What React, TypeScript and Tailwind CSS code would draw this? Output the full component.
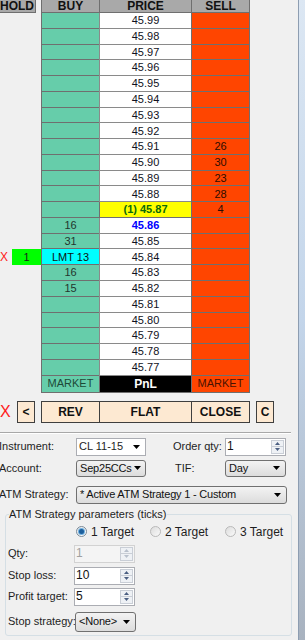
const prices = Array.from({ length: 23 }, (_, i) => (45.99 - i * 0.01).toFixed(2));

const sellVol: Record<string, string> = { '45.91': '26', '45.90': '30', '45.89': '23', '45.88': '28', '45.87': '4' };
const buyVol: Record<string, string> = { '45.86': '16', '45.85': '31', '45.83': '16', '45.82': '15' };

function DownArrow() {
  return (
    <svg width="7" height="4" viewBox="0 0 7 4" className="shrink-0">
      <polygon points="0,0 7,0 3.5,4" fill="#000" />
    </svg>
  );
}

function Spinner({ value, disabled }: { value: string; disabled?: boolean }) {
  return (
    <div
      className={
        disabled
          ? 'flex h-[18px] w-[61px] border border-[#d2d2d2] bg-[#f4f4f4] text-[#a0a0a0]'
          : 'flex h-[18px] w-[61px] border border-[#abadb3] bg-white text-[#111]'
      }
    >
      <span className="flex-1 pl-[1px] text-[12px] leading-[14px]">{value}</span>
      <div className="my-[1px] mr-[1px] flex w-[13px] flex-col border border-[#c9ced6] bg-[#eef1f5]">
        <div className="flex flex-1 items-center justify-center border-b border-[#c9ced6]">
          <svg width="5" height="3" viewBox="0 0 5 3">
            <polygon points="0,3 5,3 2.5,0" fill={disabled ? '#b8c0cc' : '#4b5f82'} />
          </svg>
        </div>
        <div className="flex flex-1 items-center justify-center">
          <svg width="5" height="3" viewBox="0 0 5 3">
            <polygon points="0,0 5,0 2.5,3" fill={disabled ? '#b8c0cc' : '#4b5f82'} />
          </svg>
        </div>
      </div>
    </div>
  );
}

function Combo({ text, w }: { text: string; w: string }) {
  return (
    <div
      className={`flex h-full items-center justify-between gap-[2px] rounded-[3px] border border-[#707070] bg-gradient-to-b from-[#f3f3f3] to-[#dcdcdc] pl-[3px] pr-[5px] text-[11px] tracking-[-0.2px] text-[#111] ${w}`}
    >
      <span className="whitespace-nowrap leading-none">{text}</span>
      <DownArrow />
    </div>
  );
}

function Radio({ checked }: { checked?: boolean }) {
  return (
    <span
      className={
        checked
          ? 'flex h-[11px] w-[11px] items-center justify-center rounded-full border border-[#7a8a99] bg-gradient-to-br from-[#e4e4e4] to-white'
          : 'flex h-[11px] w-[11px] items-center justify-center rounded-full border border-[#b9b9b9] bg-gradient-to-br from-[#dcdcdc] to-[#fafafa]'
      }
    >
      {checked && <span className="h-[5px] w-[5px] rounded-full bg-[#1d5f9c] shadow-[0_0_0_1px_#6fb0e0]" />}
    </span>
  );
}

function LadderRow({ price }: { price: string }) {
  const lmt = price === '45.84';
  const last = price === '45.87';
  const bid = price === '45.86';
  return (
    <div className="flex h-[15.78px]">
      <div className="flex w-[41px] items-stretch">
        {lmt && (
          <>
            <span className="flex w-[12px] items-center text-[12px] leading-none text-[#ff1a1a]">X</span>
            <div className="flex flex-1 items-center justify-center bg-[#00ff00] text-[11px] text-[#1a1a1a]">1</div>
          </>
        )}
      </div>
      <div
        className={
          lmt
            ? 'flex w-[58px] items-center justify-center border-b border-l border-[#6f6f6f] bg-[#00ffff] text-[11px] text-[#111]'
            : 'flex w-[58px] items-center justify-center border-b border-l border-[#6f6f6f] bg-[#66cdaa] text-[11px] text-[#22362e]'
        }
      >
        {lmt ? 'LMT 13' : buyVol[price] ?? ''}
      </div>
      <div
        className={
          last
            ? 'flex w-[92px] items-center justify-center border-b border-l border-[#6f6f6f] bg-[#ffff00] text-[11px] font-bold text-[#0a6a0a]'
            : bid
              ? 'flex w-[92px] items-center justify-center border-b border-l border-[#8a8a8a] bg-white text-[11px] font-bold text-[#0000ff]'
              : 'flex w-[92px] items-center justify-center border-b border-l border-[#8a8a8a] bg-white text-[11px] text-[#111122]'
        }
      >
        {last ? '(1) 45.87' : price}
      </div>
      <div className="flex w-[59px] items-center justify-center border-x border-b border-[#6f6f6f] bg-[#ff4500] text-[11px] text-[#2e0c00]">
        {sellVol[price] ?? ''}
      </div>
    </div>
  );
}

export default function App() {
  return (
    <div className="flex h-[640px] w-[305px] overflow-hidden bg-[#f0f0f0] font-['Liberation_Sans',Arial,sans-serif]">
      <div className="flex w-[298px] flex-col">
        {/* Header */}
        <div className="flex h-[13px] text-[12px] font-bold leading-[12px] text-[#111]">
          <div className="flex w-[36px] justify-end border-b border-r border-[#6f6f6f] bg-[#a9a9a9] pr-[1px]">HOLD</div>
          <div className="w-[5px]" />
          <div className="flex w-[58px] justify-center border-b border-l border-[#6f6f6f] bg-[#a9a9a9]">BUY</div>
          <div className="flex w-[92px] justify-center border-b border-l border-[#6f6f6f] bg-[#a9a9a9]">PRICE</div>
          <div className="flex w-[59px] justify-center border-x border-b border-[#6f6f6f] bg-[#a9a9a9]">SELL</div>
        </div>

        {prices.map((p) => (
          <LadderRow key={p} price={p} />
        ))}

        {/* Market row */}
        <div className="flex h-[17px] text-[11px]">
          <div className="w-[41px]" />
          <div className="flex w-[58px] items-center justify-center border-b border-l border-[#6f6f6f] bg-[#66cdaa] text-[#1d4a38]">MARKET</div>
          <div className="flex w-[92px] items-center justify-center border-b border-l border-[#6f6f6f] bg-black text-[12px] font-bold text-white">PnL</div>
          <div className="flex w-[59px] items-center justify-center border-x border-b border-[#6f6f6f] bg-[#ff4500] text-[#4a1200]">MARKET</div>
        </div>

        {/* Buttons */}
        <div className="mt-[8px] flex h-[22px] text-[12px] font-bold text-[#111]">
          <span className="flex w-[17px] items-center text-[16px] font-normal leading-none text-[#ff1a1a]">X</span>
          <div className="flex w-[18px] items-center justify-center border border-[#3f3f3f] bg-[#fde9d2]">&lt;</div>
          <div className="ml-[6px] flex w-[209px] border border-[#3f3f3f] bg-[#fde9d2]">
            <div className="flex w-[58px] items-center justify-center border-r border-[#3f3f3f]">REV</div>
            <div className="flex w-[92px] items-center justify-center border-r border-[#3f3f3f]">FLAT</div>
            <div className="flex flex-1 items-center justify-center">CLOSE</div>
          </div>
          <div className="ml-[6px] flex w-[18px] items-center justify-center border border-[#3f3f3f] bg-[#fde9d2]">C</div>
        </div>

        <div className="mt-[9px] w-[291px] border-b border-t border-b-white border-t-[#a8a8a8]" />

        {/* Form */}
        <div className="mt-[4px] flex h-[18px] items-center text-[11px] text-[#1e1e1e]">
          <span className="-ml-[1px] w-[77px] whitespace-nowrap">Instrument:</span>
          <div className="flex h-full w-[70px] items-center justify-between border border-[#abadb3] bg-white pl-[2px] pr-[5px]">
            <span className="whitespace-nowrap leading-none">CL 11-15</span>
            <DownArrow />
          </div>
          <span className="w-[79px] whitespace-nowrap pl-[27px]">Order qty:</span>
          <Spinner value="1" />
        </div>

        <div className="mt-[4px] flex h-[17px] items-center text-[11px] text-[#1e1e1e]">
          <span className="-ml-[1px] w-[77px] whitespace-nowrap">Account:</span>
          <Combo text="Sep25CCs" w="w-[70px]" />
          <span className="w-[79px] pl-[29px]">TIF:</span>
          <Combo text="Day" w="w-[61px]" />
        </div>

        <div className="mt-[9px] flex h-[18px] items-center text-[11px] text-[#1e1e1e]">
          <span className="-ml-[1px] w-[77px] whitespace-nowrap">ATM Strategy:</span>
          <Combo text="* Active ATM Strategy 1 - Custom" w="w-[211px]" />
        </div>

        <fieldset className="ml-[5px] mt-[4px] w-[287px] rounded-[3px] border border-[#d5dfe5] pb-[3px] pl-[2px] text-[11px] text-[#1e1e1e]">
          <legend className="ml-[1px] px-0 leading-[13px]">ATM Strategy parameters (ticks)</legend>
          <div className="mt-[4px] flex h-[14px] items-center text-[12px]">
            <div className="w-[68px]" />
            <div className="flex w-[74px] items-center gap-[4px]">
              <Radio checked />
              <span>1 Target</span>
            </div>
            <div className="flex w-[75px] items-center gap-[4px]">
              <Radio />
              <span>2 Target</span>
            </div>
            <div className="flex items-center gap-[4px]">
              <Radio />
              <span>3 Target</span>
            </div>
          </div>
          <div className="mt-[6px] flex h-[18px] items-center">
            <span className="w-[66px]">Qty:</span>
            <Spinner value="1" disabled />
          </div>
          <div className="mt-[4px] flex h-[18px] items-center">
            <span className="w-[66px]">Stop loss:</span>
            <Spinner value="10" />
          </div>
          <div className="mt-[3px] flex h-[18px] items-center">
            <span className="w-[66px] whitespace-nowrap">Profit target:</span>
            <Spinner value="5" />
          </div>
          <div className="mt-[6px] flex h-[20px] items-center">
            <span className="w-[67px] whitespace-nowrap">Stop strategy:</span>
            <Combo text="<None>" w="w-[61px]" />
          </div>
        </fieldset>
      </div>

      {/* Window frame edge */}
      <div className="flex-1 border-l border-[#8d9db1] bg-gradient-to-b from-[#dce7f3] via-[#c3d5ea] to-[#a8b2bf]" />
    </div>
  );
}
